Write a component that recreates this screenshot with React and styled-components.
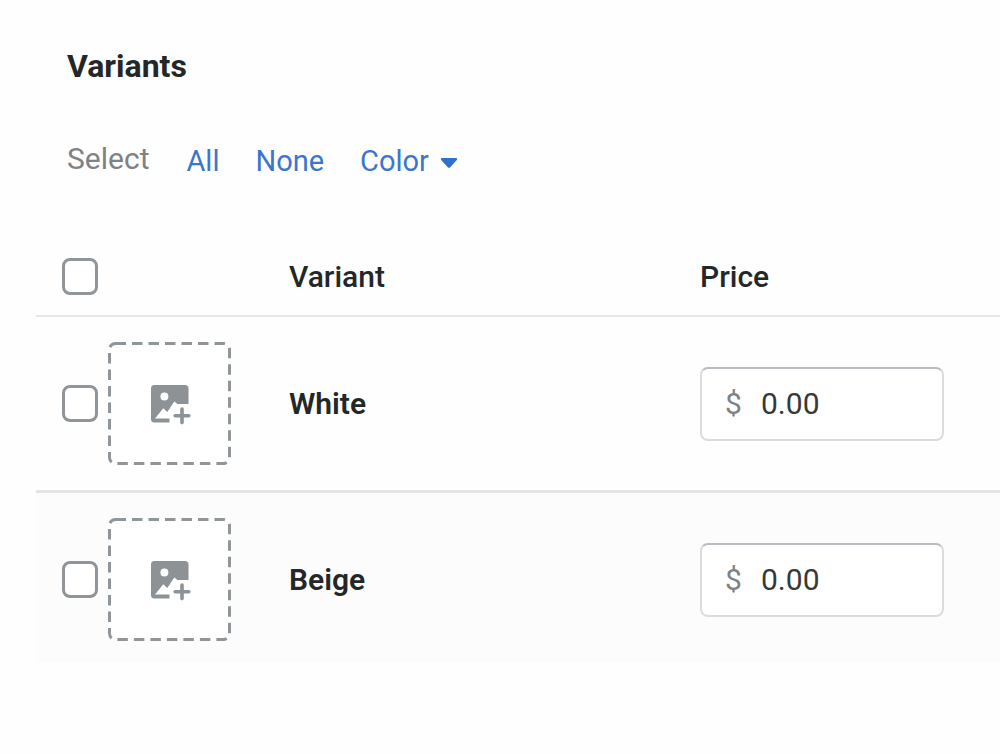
import React, { useState } from "react";
import styled, { createGlobalStyle } from "styled-components";

const GlobalStyle = createGlobalStyle`
  * {
    box-sizing: border-box;
  }
  body {
    margin: 0;
    background: #fefefe;
    color: #242727;
    font-family: Roboto, "Liberation Sans", sans-serif;
    font-size: 30px;
    line-height: 36px;
  }
`;

const Section = styled.section`
  padding: 46px 0 92px 36px;
`;

const Title = styled.h2`
  margin: 0;
  padding-left: 31px;
  font-size: 32px;
  line-height: 40px;
  font-weight: 700;
`;

const SelectBar = styled.div`
  display: flex;
  align-items: center;
  padding: 55px 31px 0;
`;

const SelectLabel = styled.span`
  color: #7f8284;
  padding-bottom: 4px;
  margin-right: 37px;
`;

const LinkButton = styled.button`
  border: 0;
  padding: 0;
  margin-right: 36px;
  background: none;
  color: #3b76cc;
  font: inherit;
  font-size: 29px;
  cursor: pointer;
`;

const OptionPicker = styled.div`
  position: relative;
`;

const OptionSelect = styled.select`
  appearance: none;
  display: block;
  field-sizing: content;
  border: 0;
  padding: 0 29px 0 0;
  background: none;
  color: #3b76cc;
  font: inherit;
  font-size: 29px;
  cursor: pointer;
`;

const Caret = styled.svg`
  position: absolute;
  right: 0;
  top: 14px;
  pointer-events: none;
`;

const Table = styled.table`
  width: 100%;
  margin-top: 57px;
  table-layout: fixed;
  border-collapse: separate;
  border-spacing: 0;
`;

const Col = styled.col`
  width: ${(props) => props.$width};
`;

const HeadCell = styled.th`
  height: 79px;
  padding: 0 0 0 ${(props) => props.$indent || "0"};
  border-bottom: 2px solid #e6e7e8;
  text-align: left;
  font-weight: 500;
`;

const Row = styled.tr`
  background: ${(props) => (props.$striped ? "#fcfcfc" : "transparent")};

  &:not(:last-child) > td {
    border-bottom: 3px solid #e2e4e6;
  }
`;

const Cell = styled.td`
  padding: 25px 0 ${(props) => (props.$last ? "21px" : "25px")}
    ${(props) => props.$indent || "0"};
  font-weight: 600;
`;

const Checkbox = styled.input`
  appearance: none;
  display: block;
  width: 36px;
  height: 37px;
  margin: 0;
  border: 3px solid #8f9598;
  border-radius: 8px;
  background: #ffffff;

  &:checked {
    background: #3873cb;
    border-color: #3873cb;
  }
`;

const ImageButton = styled.button`
  display: block;
  width: 123px;
  height: 123px;
  padding: 0;
  border: 0;
  background: none;
  cursor: pointer;
`;

const PriceField = styled.label`
  display: flex;
  align-items: center;
  width: 244px;
  height: 74px;
  padding: 0 23px;
  border: 2px solid #d9dbdd;
  border-top-color: #b9bdc1;
  border-radius: 8px;
  background: #ffffff;
  font-weight: 400;
`;

const Currency = styled.span`
  width: 36px;
  color: #7f8284;
`;

const PriceInput = styled.input`
  flex: 1;
  min-width: 0;
  padding: 0;
  border: 0;
  outline: 0;
  background: none;
  color: #36393c;
  font: inherit;
`;

const AddImage = () => (
  <svg width="123" height="123" viewBox="0 0 123 123" aria-hidden="true">
    <rect
      x="1.5"
      y="1.5"
      width="120"
      height="120"
      rx="6"
      fill="#fff"
      stroke="#8f9598"
      strokeWidth="3"
      strokeDasharray="10.5 6"
    />
    <g transform="translate(42 42)">
      <path
        fill="#8c9295"
        fillRule="evenodd"
        d="M4.5 1h30.500a3.500 3.500 0 0 1 3.500 3.500V20H27.500l-3.200-2.600-7 10.600-4-3.800L5 34.500h14.500v4h-15A3.500 3.500 0 0 1 1 35V4.500A3.500 3.500 0 0 1 4.500 1zM14.400 8.600a4 4 0 1 0 0 8 4 4 0 0 0 0-8z"
      />
      <path
        d="M32 25v13.600M25.200 31.800h13.600"
        stroke="#8c9295"
        strokeWidth="3.600"
        strokeLinecap="round"
      />
    </g>
  </svg>
);

const variants = ["White", "Beige"];

const App = () => {
  const [selected, setSelected] = useState([]);
  const [prices, setPrices] = useState({ White: "0.00", Beige: "0.00" });

  const toggle = (name) =>
    setSelected(
      selected.includes(name)
        ? selected.filter((item) => item !== name)
        : [...selected, name]
    );

  return (
    <>
      <GlobalStyle />
      <Section>
        <Title>Variants</Title>
        <SelectBar>
          <SelectLabel>Select</SelectLabel>
          <LinkButton onClick={() => setSelected(variants)}>All</LinkButton>
          <LinkButton onClick={() => setSelected([])}>None</LinkButton>
          <OptionPicker>
            <OptionSelect
              aria-label="Select by color"
              value=""
              onChange={(e) => setSelected([e.target.value])}
            >
              <option value="">Color</option>
              {variants.map((name) => (
                <option key={name}>{name}</option>
              ))}
            </OptionSelect>
            <Caret width="18" height="12" viewBox="0 0 18 12" aria-hidden="true">
              <path
                fill="#3271cb"
                d="M2 1h14c1.200 0 1.600 1.200.8 2l-6.300 7a2 2 0 0 1-3 0L1.200 3C.4 2.200.8 1 2 1z"
              />
            </Caret>
          </OptionPicker>
        </SelectBar>
        <Table>
          <colgroup>
            <Col $width="72px" />
            <Col $width="181px" />
            <Col />
            <Col $width="300px" />
          </colgroup>
          <thead>
            <tr>
              <HeadCell $indent="26px">
                <Checkbox
                  type="checkbox"
                  aria-label="Select all variants"
                  checked={selected.length === variants.length}
                  onChange={(e) => setSelected(e.target.checked ? variants : [])}
                />
              </HeadCell>
              <HeadCell />
              <HeadCell>Variant</HeadCell>
              <HeadCell>Price</HeadCell>
            </tr>
          </thead>
          <tbody>
            {variants.map((name, i) => (
              <Row key={name} $striped={i % 2 === 1}>
                <Cell $indent="26px" $last={i === variants.length - 1}>
                  <Checkbox
                    type="checkbox"
                    aria-label={`Select ${name}`}
                    checked={selected.includes(name)}
                    onChange={() => toggle(name)}
                  />
                </Cell>
                <Cell $last={i === variants.length - 1}>
                  <ImageButton aria-label={`Add image for ${name}`}>
                    <AddImage />
                  </ImageButton>
                </Cell>
                <Cell $last={i === variants.length - 1}>{name}</Cell>
                <Cell $last={i === variants.length - 1}>
                  <PriceField>
                    <Currency>$</Currency>
                    <PriceInput
                      type="text"
                      aria-label={`Price for ${name}`}
                      value={prices[name]}
                      onChange={(e) =>
                        setPrices({ ...prices, [name]: e.target.value })
                      }
                    />
                  </PriceField>
                </Cell>
              </Row>
            ))}
          </tbody>
        </Table>
      </Section>
    </>
  );
};

export default App;
